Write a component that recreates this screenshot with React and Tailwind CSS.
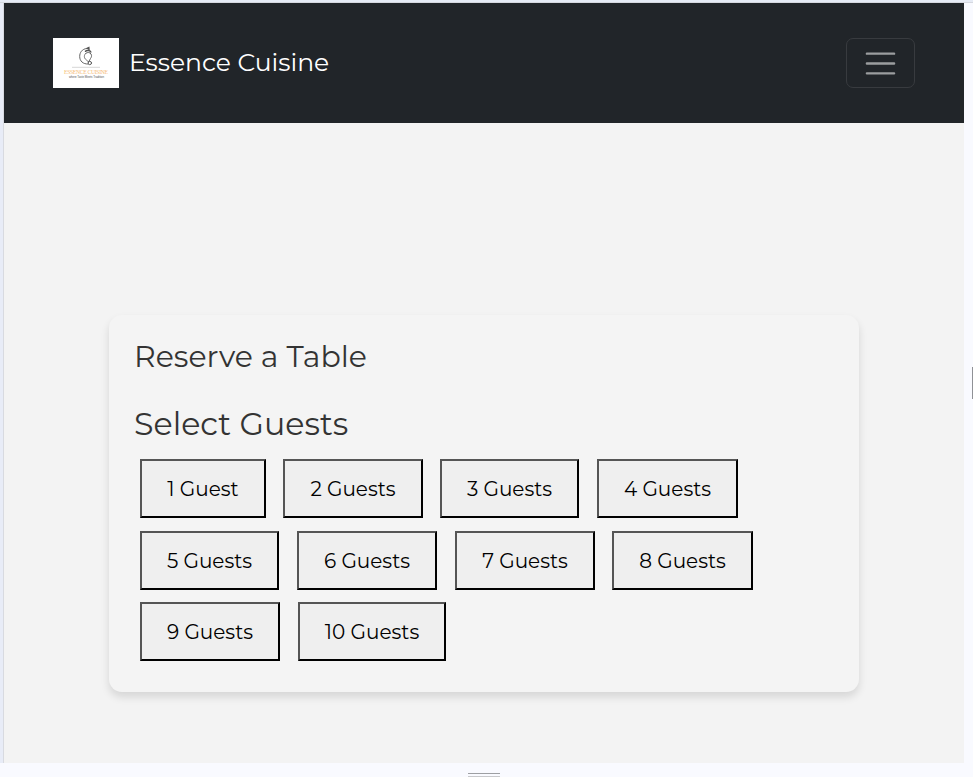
const rows = [
  [
    { label: '1 Guest', size: 'w-[126px]', space: 'mr-[17px]' },
    { label: '2 Guests', size: 'w-[140px]', space: 'mr-[17px]' },
    { label: '3 Guests', size: 'w-[139px]', space: 'mr-[18px]' },
    { label: '4 Guests', size: 'w-[141px]', space: '' },
  ],
  [
    { label: '5 Guests', size: 'w-[139px]', space: 'mr-[18px]' },
    { label: '6 Guests', size: 'w-[140px]', space: 'mr-[18px]' },
    { label: '7 Guests', size: 'w-[140px]', space: 'mr-[17px]' },
    { label: '8 Guests', size: 'w-[141px]', space: '' },
  ],
  [
    { label: '9 Guests', size: 'w-[140px]', space: 'mr-[18px]' },
    { label: '10 Guests', size: 'w-[148px]', space: '' },
  ],
];

const rowSpacing = ['mb-[13px]', 'mb-[12px]', ''];

function Logo() {
  return (
    <svg className="h-[50px] w-[66px] shrink-0 overflow-visible bg-white" viewBox="0 0 66 50" fill="none">
      <g stroke="#555" strokeWidth="0.9" strokeLinecap="round">
        <path d="M33.5 10.5C29 11 26.7 14.5 26.7 18.5C26.7 23 30 26.3 35 26" />
        <path d="M32.8 15.2C30.8 17 30.8 20 33 21.6L35.6 24" strokeWidth="0.8" />
        <path d="M33 15.2C34.5 14 37 14.3 38 16C39.2 18 38.2 19.5 37.5 20.5L35.5 24.2" />
        <circle cx="36.8" cy="25" r="1.7" />
        <path d="M32.5 13.3C33.5 12 37 12 37.8 14M34 10.5L35.8 9.6L36 12" strokeWidth="1.5" />
      </g>
      <path d="M19 29.3H47" stroke="#bbb" strokeWidth="0.6" />
      <text x="11" y="35.8" textLength="44" fontFamily="Liberation Serif, serif" fontSize="5.7" fill="#f6bd78">ESSENCE CUISINE</text>
      <text x="16" y="40.2" textLength="35" fontFamily="Liberation Sans, sans-serif" fontSize="2.9" fill="#555">where Taste Meets Tradition</text>
    </svg>
  );
}

export default function App() {
  return (
    <div className="flex h-[777px] w-[973px] flex-col overflow-hidden bg-[#f9faff] font-['Montserrat','Inter',sans-serif]">
      <div className="h-[3px] shrink-0 border-b border-[#d5d8df] bg-[#e6ebf5]" />
      <div className="flex h-[760px] shrink-0">
        <div className="w-1 border-r border-[#d8dae0] bg-[#e8ecf7]" />
        <div className="w-[960px] bg-[#f3f3f3]">
          <nav className="flex h-[120px] items-center bg-[#212529] pl-[49px] pr-[49px]">
            <Logo />
            <span className="ml-[10px] mt-[-2px] text-[25px] leading-[38px] text-white">Essence Cuisine</span>
            <button className="ml-auto flex h-[50px] w-[69px] items-center justify-center rounded-[7px] border border-[#383b3f]">
              <svg className="h-[37px] w-[37px]" viewBox="0 0 30 30" fill="none" stroke="#9b9d9f" strokeWidth="2" strokeLinecap="round" strokeMiterlimit="10">
                <path d="M4 7h22M4 15h22M4 23h22" />
              </svg>
            </button>
          </nav>
          <main className="px-[105px] pt-[192px]">
            <section className="h-[377px] w-[750px] rounded-[13px] bg-[#f4f4f4] px-[25px] pt-[23px] shadow-[0_5px_8px_rgba(0,0,0,0.12)]">
              <h2 className="h-[38px] whitespace-nowrap text-[30px] font-normal leading-[38px] text-[#333]">Reserve a Table</h2>
              <h3 className="mt-[29px] h-[38px] whitespace-nowrap text-[31.7px] font-normal leading-[38px] text-[#333]">Select Guests</h3>
              <div className="ml-[6px] mt-[16px]">
                {rows.map((row, i) => (
                  <div key={i} className={`flex ${rowSpacing[i]}`}>
                    {row.map((b) => (
                      <button key={b.label} className={`h-[59px] whitespace-nowrap border-2 border-b-black border-l-[#555] border-r-black border-t-[#555] bg-[#efefef] text-[20px] text-black ${b.size} ${b.space}`}>
                        {b.label}
                      </button>
                    ))}
                  </div>
                ))}
              </div>
            </section>
          </main>
        </div>
        <div className="flex flex-1 items-center justify-end">
          <div className="h-[32px] w-px bg-[#8f9196]" />
        </div>
      </div>
      <div className="flex flex-1 flex-col items-center pr-[5px] pt-[10px]">
        <div className="h-px w-8 bg-[#9d9fa3]" />
        <div className="mt-[2px] h-px w-8 bg-[#c8c9cc]" />
      </div>
    </div>
  );
}
